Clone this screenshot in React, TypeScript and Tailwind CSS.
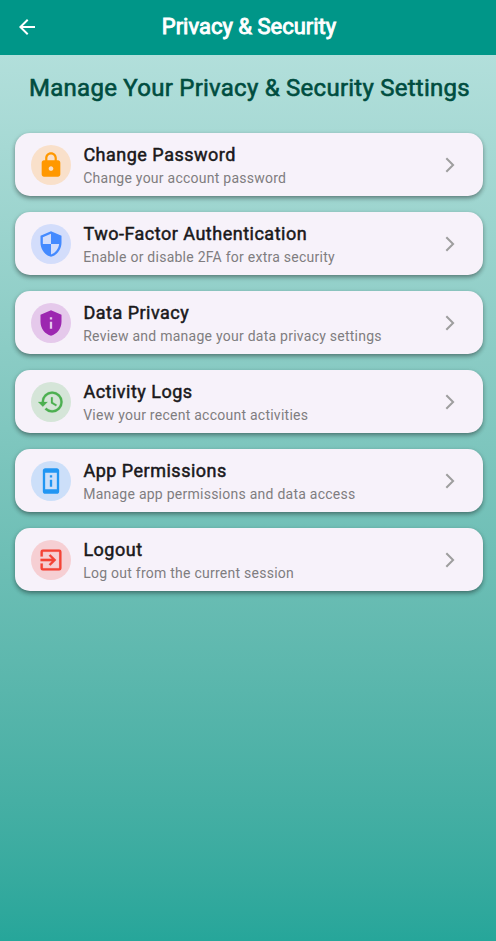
import React from 'react';
import { MdArrowBack, MdLock, MdSecurity, MdPrivacyTip, MdPermDeviceInformation } from 'react-icons/md';

type IconProps = { className?: string };

function HistoryIcon({ className }: IconProps) {
  return (
    <svg viewBox="0 0 24 24" className={className} fill="currentColor" stroke="currentColor" strokeWidth="0.2">
      <path d="M13 3a9 9 0 0 0-9 9H1l3.89 3.89.07.14L9 12H6c0-3.87 3.13-7 7-7s7 3.13 7 7-3.13 7-7 7c-1.93 0-3.68-.79-4.94-2.06l-1.42 1.42A8.954 8.954 0 0 0 13 21a9 9 0 0 0 0-18zm-1 5v5l4.28 2.54.72-1.21-3.5-2.08V8H12z" />
    </svg>
  );
}

function ExitIcon({ className }: IconProps) {
  return (
    <svg viewBox="0 0 24 24" className={className} fill="currentColor" stroke="currentColor" strokeWidth="0.1">
      <path d="M10.09 15.59 11.5 17l5-5-5-5-1.41 1.41L12.67 11H3v2h9.67l-2.58 2.59zM19 3H5a2 2 0 0 0-2 2v4h2V5h14v14H5v-4H3v4a2 2 0 0 0 2 2h14a2 2 0 0 0 2-2V5a2 2 0 0 0-2-2z" />
    </svg>
  );
}

function ChevronIcon({ className }: IconProps) {
  return (
    <svg viewBox="0 0 24 24" className={className} fill="none" stroke="currentColor" strokeWidth="2.7">
      <path d="M7.1 3 16.1 12l-9 9" />
    </svg>
  );
}

const items = [
  { title: 'Change Password', sub: 'Change your account password', Icon: MdLock, style: 'bg-[#f9e0ca] text-[#ff9800]' },
  { title: 'Two-Factor Authentication', sub: 'Enable or disable 2FA for extra security', Icon: MdSecurity, style: 'bg-[#d3ddfb] text-[#448aff]' },
  { title: 'Data Privacy', sub: 'Review and manage your data privacy settings', Icon: MdPrivacyTip, style: 'bg-[#e5c9eb] text-[#9c27b0]' },
  { title: 'Activity Logs', sub: 'View your recent account activities', Icon: HistoryIcon, style: 'bg-[#d5e5d8] text-[#4caf50]' },
  { title: 'App Permissions', sub: 'Manage app permissions and data access', Icon: MdPermDeviceInformation, style: 'bg-[#ccdff9] text-[#2196f3]' },
  { title: 'Logout', sub: 'Log out from the current session', Icon: ExitIcon, style: 'bg-[#f6cfd3] text-[#f44336]' },
];

export default function App() {
  return (
    <div className="flex h-[941px] w-full flex-col font-['Roboto',sans-serif]">
      <header className="grid h-[55px] shrink-0 grid-cols-[54px_1fr_52px] items-center bg-[#009688] text-white">
        <MdArrowBack className="mb-px ml-[15px] size-6" />
        <h1 className="pb-[3px] text-center text-[22px] font-normal whitespace-nowrap [-webkit-text-stroke:0.9px_currentColor]">Privacy &amp; Security</h1>
      </header>
      <main className="flex-1 bg-linear-to-b from-[#b2dfdb] to-[#26a69a] pr-[13px] pl-[15px]">
        <h2 className="pt-[17px] pl-px text-center text-2xl font-normal tracking-[0.25px] whitespace-nowrap text-[#004d40] [-webkit-text-stroke:0.6px_currentColor]">Manage Your Privacy &amp; Security Settings</h2>
        <ul className="mt-[29px] flex flex-col gap-4">
          {items.map(({ title, sub, Icon, style }) => (
            <li key={title} className="flex h-[63px] items-center rounded-[15px] bg-[#f7f2fa] pr-6 pl-4 shadow-[0_2px_4px_-1px_rgba(0,0,0,0.3),0_3px_5px_rgba(0,0,0,0.16),0_1px_6px_rgba(0,0,0,0.08)]">
              <span className={`flex size-10 shrink-0 items-center justify-center rounded-full ${style}`}>
                <Icon className="size-7" />
              </span>
              <div className="ml-3 flex-1">
                <h3 className="pl-[0.4px] text-lg leading-6 font-normal tracking-[0.5px] text-[#1a191b] [-webkit-text-stroke:0.5px_currentColor]">{title}</h3>
                <p className="mt-px -mb-px pl-[0.2px] text-sm leading-5 tracking-[0.25px] text-[#7f7d80]">{sub}</p>
              </div>
              <ChevronIcon className="size-[18px] text-[#9e9e9e]" />
            </li>
          ))}
        </ul>
      </main>
    </div>
  );
}
